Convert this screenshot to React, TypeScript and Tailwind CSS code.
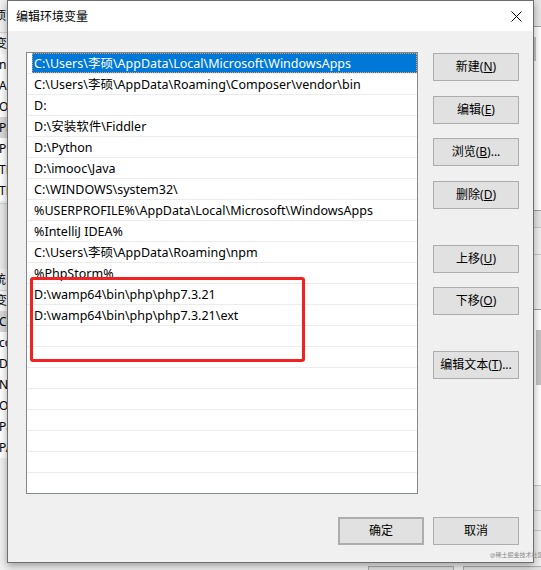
import React from 'react';

const paths = [
    'C:\\Users\\李硕\\AppData\\Local\\Microsoft\\WindowsApps',
    'C:\\Users\\李硕\\AppData\\Roaming\\Composer\\vendor\\bin',
    'D:',
    'D:\\安装软件\\Fiddler',
    'D:\\Python',
    'D:\\imooc\\Java',
    'C:\\WINDOWS\\system32\\',
    '%USERPROFILE%\\AppData\\Local\\Microsoft\\WindowsApps',
    '%IntelliJ IDEA%',
    'C:\\Users\\李硕\\AppData\\Roaming\\npm',
    '%PhpStorm%',
    'D:\\wamp64\\bin\\php\\php7.3.21',
    'D:\\wamp64\\bin\\php\\php7.3.21\\ext',
    '', '', '', '', '', '', '', '',
];

const sideButtons = [
    { label: '新建', key: 'N', gap: 'mt-0' },
    { label: '编辑', key: 'E', gap: 'mt-[15px]' },
    { label: '浏览', key: 'B', tail: '...', gap: 'mt-[14px]' },
    { label: '删除', key: 'D', gap: 'mt-[15px]' },
    { label: '上移', key: 'U', gap: 'mt-[36px]' },
    { label: '下移', key: 'O', gap: 'mt-[14px]' },
    { label: '编辑文本', key: 'T', tail: '...', gap: 'mt-[36px]' },
];

const upperRows = ['变量', 'ni', 'AI', 'On', 'Pa', 'PH', 'TE', 'TM'];
const lowerRows = ['Co', 'co', 'Dr', 'NU', 'OS', 'Pa', 'PA'];

const WinButton = ({ children, className = '' }: { children: React.ReactNode; className?: string }) => (
    <div className={`w-[86px] h-[28px] flex items-center justify-center bg-[#e1e1e1] border border-[#adadad] text-[12px] text-black ${className}`}>
        {children}
    </div>
);

const BackgroundWindow = () => (
    <div className="absolute inset-0 bg-[#f0f0f0] text-[12px] text-black">
        {/* left strip of the window behind */}
        <div className="absolute left-0 top-0 w-[20px] h-full">
            <div className="h-[33px] flex items-center -ml-[6px] border-b border-[#d0d0d0]">项</div>
            <div className="h-[21px] flex items-center -ml-[5px] bg-[#f7f7f7]">变量</div>
            {upperRows.slice(1).map((t) => (
                <div key={t} className={`h-[21px] flex items-center -ml-[1px] ${t === 'Pa' ? 'bg-[#d9d9d9]' : 'bg-white'}`}>
                    {t}
                </div>
            ))}
            <div className="h-[66px] mt-[2px] border-t border-[#d0d0d0] bg-[#e8e8e8]" />
            <div className="h-[21px] flex items-center -ml-[6px]">统</div>
            <div className="h-[21px] flex items-center -ml-[5px] border-t border-[#d0d0d0] bg-[#f7f7f7]">变量</div>
            {lowerRows.map((t) => (
                <div key={t} className={`h-[21px] flex items-center -ml-[1px] ${t === 'Co' ? 'bg-[#d9d9d9]' : 'bg-white'}`}>
                    {t}
                </div>
            ))}
        </div>

        {/* right strip of the window behind */}
        <div className="absolute right-0 top-0 w-[8px] h-full flex flex-col">
            <div className="h-[27px] border-b border-[#a0a0a0] bg-[#e6e6e6]" />
            <div className="h-[184px] bg-white border-b border-[#a0a0a0] flex">
                <div className="w-[2px] ml-[1px] mt-[10px] h-[24px] bg-[#c8c8c8]" />
            </div>
            <div className="h-[17px] border-b border-[#c8c8c8] bg-[#e6e6e6]" />
            <div className="h-[27px] border-b border-[#c8c8c8] bg-[#f0f0f0]" />
            <div className="h-[55px] border-b border-[#a0a0a0] bg-[#f0f0f0]" />
            <div className="h-[176px] bg-white border-b border-[#c8c8c8] flex justify-end">
                <div className="w-[5px] mt-[20px] h-[55px] bg-[#c2c2c2]" />
            </div>
            <div className="h-[25px] border-b border-[#c8c8c8] bg-[#f0f0f0]" />
            <div className="h-[20px] border-b border-[#c8c8c8] bg-[#f0f0f0]" />
        </div>

        {/* buttons of the window behind, peeking below the dialog */}
        <div className="absolute left-[368px] top-[566px] w-[86px] h-[24px] bg-[#e1e1e1] border border-[#adadad]" />
        <div className="absolute left-[463px] top-[566px] w-[86px] h-[24px] bg-[#e1e1e1] border border-[#adadad]" />
    </div>
);

const App = () => {
    return (
        <div className="relative w-[541px] h-[570px] overflow-hidden font-['Noto_Sans','Noto_Sans_CJK_SC',sans-serif]">
            <BackgroundWindow />

            {/* Dialog */}
            <div className="absolute left-[7px] top-0 w-[527px] h-[563px] border border-[#6e6e6e] bg-[#f0f0f0] shadow-[0_3px_8px_rgba(0,0,0,0.35)] flex flex-col">
                {/* Title bar */}
                <div className="h-[30px] bg-white flex items-center justify-between pl-[8px] pr-[10px]">
                    <span className="text-[12px] text-black pt-[1px]">编辑环境变量</span>
                    <svg width="11" height="11" viewBox="0 0 11 11" className="mr-[1px]">
                        <path d="M0.5 0.5 L10.5 10.5 M10.5 0.5 L0.5 10.5" stroke="#000" strokeWidth="1" fill="none" />
                    </svg>
                </div>

                {/* Body */}
                <div className="flex pl-[18px] pt-[21px]">
                    {/* Path list */}
                    <div className="w-[392px] h-[442px] border border-[#828790] bg-white overflow-hidden">
                        {paths.map((p, i) =>
                            i === 0 ? (
                                <div key={i} className="h-[21px] border-b border-[#ececec]">
                                    <div className="ml-[5px] h-[20px] bg-[#0078d7] outline-1 outline-dotted outline-[#f0a050] -outline-offset-1 flex items-center pl-[2px] pt-[2px] text-[12.5px] text-white whitespace-nowrap">
                                        {p}
                                    </div>
                                </div>
                            ) : (
                                <div key={i} className="h-[21px] border-b border-[#ececec] flex items-center pl-[7px] pt-[2px] text-[12.5px] text-black whitespace-nowrap">
                                    {p}
                                </div>
                            )
                        )}
                    </div>

                    {/* Side buttons */}
                    <div className="ml-[15px] pt-[1px] flex flex-col">
                        {sideButtons.map((b) => (
                            <WinButton key={b.key} className={b.gap}>
                                {b.label}(<span className="underline">{b.key}</span>){b.tail ?? ''}
                            </WinButton>
                        ))}
                    </div>
                </div>

                {/* Footer */}
                <div className="flex justify-end gap-[9px] pr-[14px] mt-[23px]">
                    <WinButton className="border-2 border-[#0078d7]">确定</WinButton>
                    <WinButton>取消</WinButton>
                </div>
            </div>

            {/* Red annotation box */}
            <div className="absolute left-[30px] top-[277px] w-[275px] h-[85px] border-[3px] border-[#f22222] rounded-[3px]" />

            {/* Watermark */}
            <div className="absolute left-[490px] top-[552px] text-[6px] leading-none text-[#8a8a8a] whitespace-nowrap">
                @稀土掘金技术社区
            </div>
        </div>
    );
};

export default App;
